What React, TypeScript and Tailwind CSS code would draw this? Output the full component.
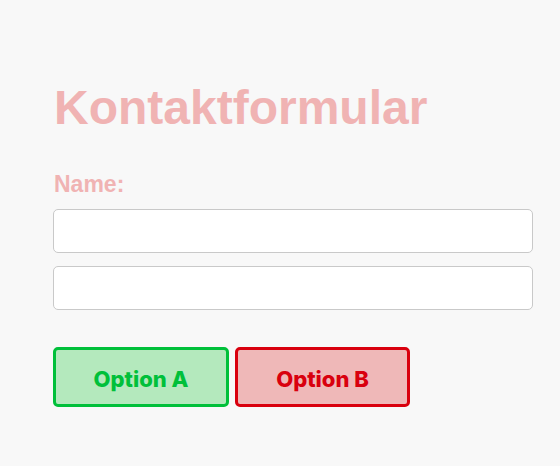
export default function App() {
  return (
    <div className="min-h-screen w-full bg-[#f8f8f8] px-[53px] pt-[79px]">
      <h1 className="font-['Liberation_Sans',Arial,sans-serif] text-[48px] font-bold leading-[1.2] text-[#f0b3b3] pl-px">
        Kontaktformular
      </h1>
      <form className="mt-[36px]">
        <label className="block pl-px font-['Liberation_Sans',Arial,sans-serif] text-[23px] font-bold leading-[22px] text-[#f0b3b3]">
          Name:
        </label>
        <input
          type="text"
          className="mt-[14px] block h-[44px] w-[480px] rounded-[5px] border border-[#c9c9c9] bg-white"
        />
        <input
          type="text"
          className="mt-[13px] block h-[44px] w-[480px] rounded-[5px] border border-[#c9c9c9] bg-white"
        />
        <div className="mt-[37px] flex gap-[6px]">
          <button
            type="button"
            className="h-[60px] w-[176px] rounded-[5px] border-[3px] border-[#00c03a] bg-[#b4e9bd] pt-[6px] font-['Inter',sans-serif] text-[22px] font-extrabold text-[#00c03a]"
          >
            Option A
          </button>
          <button
            type="button"
            className="h-[60px] w-[175px] rounded-[5px] border-[3px] border-[#d9000e] bg-[#efb8b8] pt-[6px] font-['Inter',sans-serif] text-[22px] font-extrabold text-[#d9000e]"
          >
            Option B
          </button>
        </div>
      </form>
    </div>
  );
}
